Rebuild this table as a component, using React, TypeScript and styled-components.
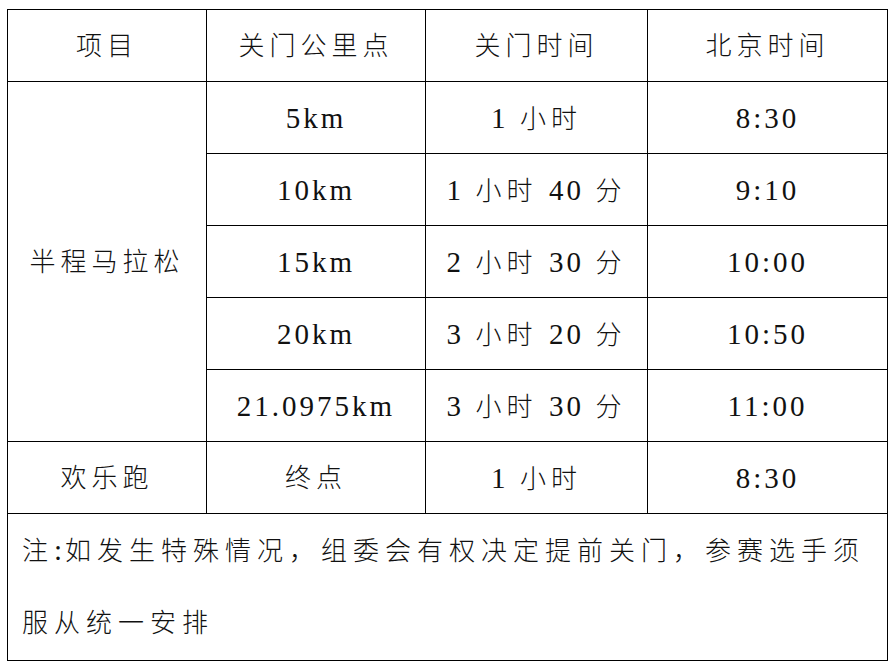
import React from 'react'
import styled, { createGlobalStyle } from 'styled-components'

const GlobalStyle = createGlobalStyle`
  html, body {
    margin: 0;
    padding: 0;
    background: #fff;
  }
`

interface Row {
  point: string
  closing: string
  beijing: string
}

const halfMarathon: Row[] = [
  { point: '5km', closing: '1 小时', beijing: '8:30' },
  { point: '10km', closing: '1 小时 40 分', beijing: '9:10' },
  { point: '15km', closing: '2 小时 30 分', beijing: '10:00' },
  { point: '20km', closing: '3 小时 20 分', beijing: '10:50' },
  { point: '21.0975km', closing: '3 小时 30 分', beijing: '11:00' },
]

const Page = styled.div`
  padding: 9px 0 0 7px;
`

const Table = styled.table`
  width: 880px;
  border-collapse: collapse;
  table-layout: fixed;
  color: #111;
  font-family: 'Liberation Serif', 'Noto Sans CJK SC', serif;
  font-size: 26px;
  font-weight: 300;
  letter-spacing: 5px;
`

const Col = styled.col<{ $w: number }>`
  width: ${p => p.$w}px;
`

const Tr = styled.tr<{ $tall?: boolean }>`
  height: ${p => (p.$tall ? '142px' : '72px')};
`

const Cell = styled.td`
  border: 1px solid #000;
  padding: 2px 0 0 0;
  text-align: center;
  vertical-align: middle;
  line-height: 1.2;
  white-space: nowrap;
`

const NoteCell = styled.td`
  border: 1px solid #000;
  padding: 0 10px 0 14px;
  text-align: left;
  vertical-align: middle;
  line-height: 72px;
  letter-spacing: 6px;
`

const Latin = styled.span`
  font-family: 'Liberation Serif', serif;
  font-size: 29px;
  font-weight: 400;
  letter-spacing: 3px;
`

const latinRun = /([0-9A-Za-z.:]+)/

function Mixed({ text }: { text: string }) {
  const parts = text.split(latinRun)
  return (
    <>
      {parts.map((part, i) =>
        i % 2 === 1 ? <Latin key={i}>{part}</Latin> : <span key={i}>{part}</span>,
      )}
    </>
  )
}

export default function App() {
  return (
    <Page>
      <GlobalStyle />
      <Table>
        <colgroup>
          <Col $w={199} />
          <Col $w={219} />
          <Col $w={222} />
          <Col $w={240} />
        </colgroup>
        <tbody>
          <Tr>
            <Cell>项目</Cell>
            <Cell>关门公里点</Cell>
            <Cell>关门时间</Cell>
            <Cell>北京时间</Cell>
          </Tr>
          {halfMarathon.map((row, i) => (
            <Tr key={row.point}>
              {i === 0 && <Cell rowSpan={halfMarathon.length}>半程马拉松</Cell>}
              <Cell>
                <Mixed text={row.point} />
              </Cell>
              <Cell>
                <Mixed text={row.closing} />
              </Cell>
              <Cell>
                <Mixed text={row.beijing} />
              </Cell>
            </Tr>
          ))}
          <Tr>
            <Cell>欢乐跑</Cell>
            <Cell>终点</Cell>
            <Cell>
              <Mixed text="1 小时" />
            </Cell>
            <Cell>
              <Mixed text="8:30" />
            </Cell>
          </Tr>
          <Tr $tall>
            <NoteCell colSpan={4}>
              <Mixed text="注:如发生特殊情况，组委会有权决定提前关门，参赛选手须服从统一安排" />
            </NoteCell>
          </Tr>
        </tbody>
      </Table>
    </Page>
  )
}
